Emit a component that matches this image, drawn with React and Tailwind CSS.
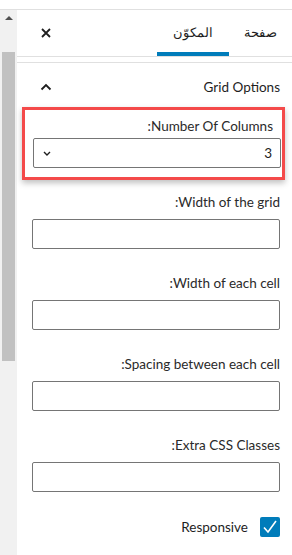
import React from 'react'

const font = { fontFamily: 'Lato, "Noto Sans", sans-serif' }

function Field({ label, children }) {
  return (
    <div className="mb-[25px]">
      <div className="text-[13.5px] leading-[18px] font-normal text-[#2a2a2a] mb-[8px]">{label}</div>
      {children}
    </div>
  )
}

function TextInput() {
  return <div className="h-[30px] rounded-[2px] border border-[#757575] bg-white" />
}

export default function App() {
  return (
    <div className="w-[292px] h-[555px] overflow-hidden bg-white flex flex-col" style={font}>
      <div className="h-[10px] shrink-0 border-b border-[#e0e0e0]" />
      <div className="flex flex-1 min-h-0">
        {/* scrollbar */}
        <div className="w-[17px] shrink-0 bg-[#f1f1f1] flex flex-col items-center">
          <div className="mt-[6px] w-0 h-0 border-l-[4px] border-r-[4px] border-b-[4px] border-l-transparent border-r-transparent border-b-[#505050]" />
          <div className="mt-[32px] w-[13px] h-[309px] bg-[#c1c1c1]" />
        </div>

        <div dir="rtl" className="flex-1 min-w-0 flex flex-col text-[#1e1e1e]">
          {/* tabs */}
          <div className="h-[47px] shrink-0 flex items-stretch border-b border-[#e0e0e0]">
            <button className="w-[63px] text-[13px] flex items-center justify-center" style={{ fontFamily: '"Noto Sans", sans-serif' }}>صفحة</button>
            <button className="w-[72px] text-[13px] flex items-center justify-center relative" style={{ fontFamily: '"Noto Sans", sans-serif' }}>
              المكوّن
              <span className="absolute bottom-0 left-0 right-0 h-[4px] bg-[#007cba]" />
            </button>
            <div className="flex-1" />
            <button className="w-[56px] flex items-center justify-center pl-[1px]">
              <svg width="10" height="10" viewBox="0 0 10 10" fill="none" stroke="#1e1e1e" strokeWidth="1.8">
                <path d="M1 1l8 8M9 1l-8 8" />
              </svg>
            </button>
          </div>

          <div className="h-[6px] shrink-0 border-b border-[#e0e0e0]" />

          {/* panel header */}
          <div className="h-[48px] shrink-0 flex items-center justify-between pr-[12px] pl-[23px]">
            <span className="text-[13.5px]">Grid Options</span>
            <svg width="12" height="8" viewBox="0 0 12 8" fill="none" stroke="#1e1e1e" strokeWidth="1.8">
              <path d="M1.5 6.5L6 2l4.5 4.5" />
            </svg>
          </div>

          <div className="pr-[12px] pl-[15px] pt-[6px]">
            <div className="relative mb-[25px]">
              <div className="absolute -top-[10px] -bottom-[12px] -left-[10px] -right-[5px] border-[3px] border-[#f44a4a] shadow-[0_3px_6px_rgba(0,0,0,0.25)] pointer-events-none" />
              <div className="text-[13.5px] leading-[18px] text-[#2a2a2a] mb-[3px] mr-[7px]">Number Of Columns:</div>
              <div className="h-[30px] mr-[-1px] ml-[1px] rounded-[2px] border border-[#757575] flex items-center justify-between pr-[8px] pl-[9px] text-[13.5px]">
                <span>3</span>
                <svg width="8" height="5" viewBox="0 0 8 5" fill="none" stroke="#1e1e1e" strokeWidth="1.4">
                  <path d="M1 1l3 3 3-3" />
                </svg>
              </div>
            </div>

            <Field label="Width of the grid:"><TextInput /></Field>
            <Field label="Width of each cell:"><TextInput /></Field>
            <Field label="Spacing between each cell:"><TextInput /></Field>
            <Field label="Extra CSS Classes:"><TextInput /></Field>

            <div className="flex items-center gap-[12px] mt-[1px]">
              <span className="w-[20px] h-[20px] rounded-[2px] bg-[#007cba] flex items-center justify-center">
                <svg width="16" height="14" viewBox="0 0 16 14" fill="none" stroke="#fff" strokeWidth="1.6">
                  <path d="M2 7.5l4 4.5 8-11" />
                </svg>
              </span>
              <span className="text-[13.5px]">Responsive</span>
            </div>
          </div>
        </div>
      </div>
    </div>
  )
}
